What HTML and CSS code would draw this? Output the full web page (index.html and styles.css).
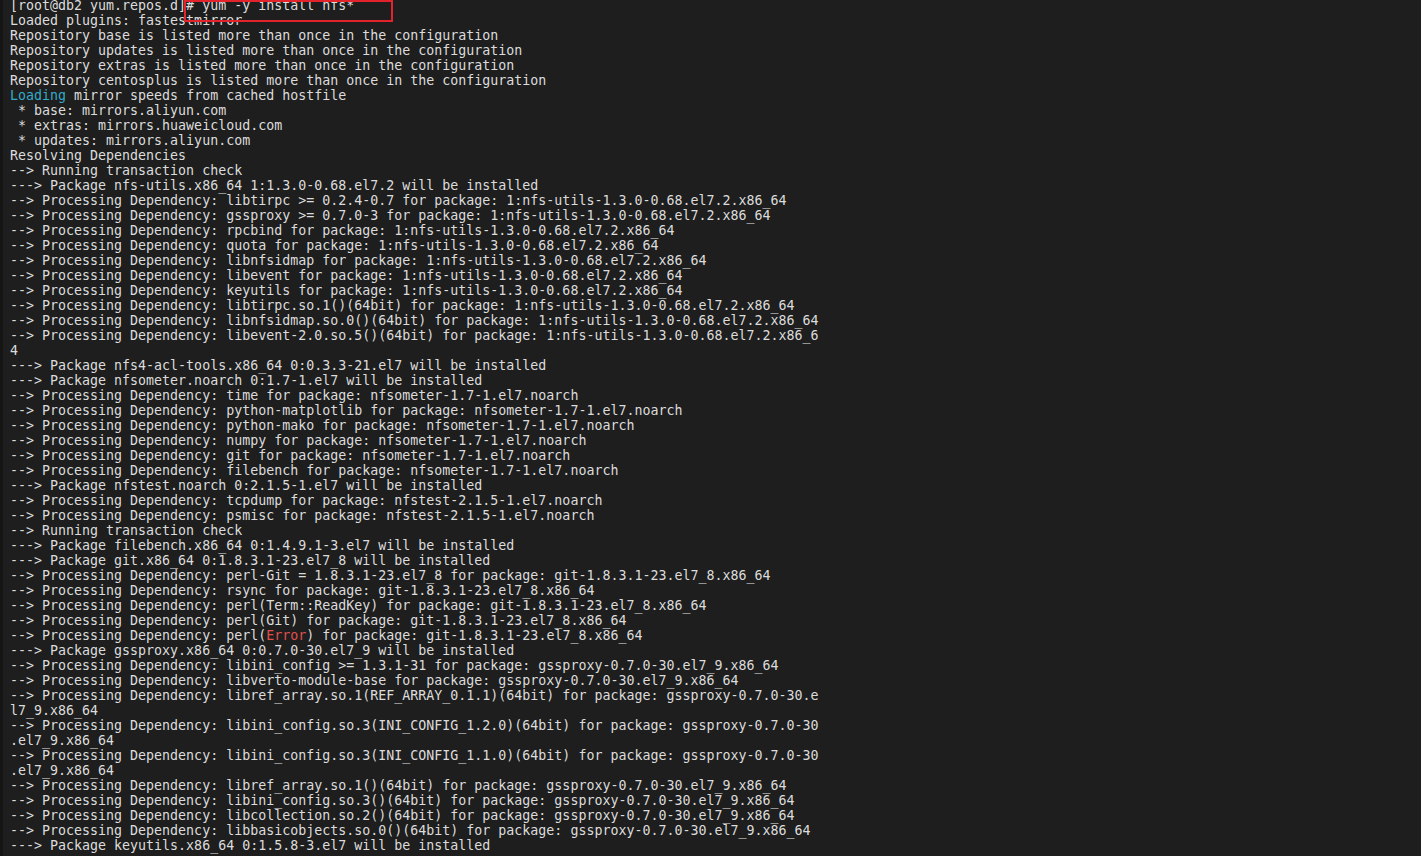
FILE: index.html
```html
<!DOCTYPE html>
<html lang="en">
<head>
<meta charset="utf-8">
<title>yum install nfs*</title>
<link rel="stylesheet" href="styles.css">
</head>
<body>
<div class="terminal">
<pre class="output">[root@db2 yum.repos.d]# yum -y install nfs*
Loaded plugins: fastestmirror
Repository base is listed more than once in the configuration
Repository updates is listed more than once in the configuration
Repository extras is listed more than once in the configuration
Repository centosplus is listed more than once in the configuration
<span class="cyan">Loading</span> mirror speeds from cached hostfile
 * base: mirrors.aliyun.com
 * extras: mirrors.huaweicloud.com
 * updates: mirrors.aliyun.com
Resolving Dependencies
--&gt; Running transaction check
---&gt; Package nfs-utils.x86_64 1:1.3.0-0.68.el7.2 will be installed
--&gt; Processing Dependency: libtirpc &gt;= 0.2.4-0.7 for package: 1:nfs-utils-1.3.0-0.68.el7.2.x86_64
--&gt; Processing Dependency: gssproxy &gt;= 0.7.0-3 for package: 1:nfs-utils-1.3.0-0.68.el7.2.x86_64
--&gt; Processing Dependency: rpcbind for package: 1:nfs-utils-1.3.0-0.68.el7.2.x86_64
--&gt; Processing Dependency: quota for package: 1:nfs-utils-1.3.0-0.68.el7.2.x86_64
--&gt; Processing Dependency: libnfsidmap for package: 1:nfs-utils-1.3.0-0.68.el7.2.x86_64
--&gt; Processing Dependency: libevent for package: 1:nfs-utils-1.3.0-0.68.el7.2.x86_64
--&gt; Processing Dependency: keyutils for package: 1:nfs-utils-1.3.0-0.68.el7.2.x86_64
--&gt; Processing Dependency: libtirpc.so.1()(64bit) for package: 1:nfs-utils-1.3.0-0.68.el7.2.x86_64
--&gt; Processing Dependency: libnfsidmap.so.0()(64bit) for package: 1:nfs-utils-1.3.0-0.68.el7.2.x86_64
--&gt; Processing Dependency: libevent-2.0.so.5()(64bit) for package: 1:nfs-utils-1.3.0-0.68.el7.2.x86_6
4
---&gt; Package nfs4-acl-tools.x86_64 0:0.3.3-21.el7 will be installed
---&gt; Package nfsometer.noarch 0:1.7-1.el7 will be installed
--&gt; Processing Dependency: time for package: nfsometer-1.7-1.el7.noarch
--&gt; Processing Dependency: python-matplotlib for package: nfsometer-1.7-1.el7.noarch
--&gt; Processing Dependency: python-mako for package: nfsometer-1.7-1.el7.noarch
--&gt; Processing Dependency: numpy for package: nfsometer-1.7-1.el7.noarch
--&gt; Processing Dependency: git for package: nfsometer-1.7-1.el7.noarch
--&gt; Processing Dependency: filebench for package: nfsometer-1.7-1.el7.noarch
---&gt; Package nfstest.noarch 0:2.1.5-1.el7 will be installed
--&gt; Processing Dependency: tcpdump for package: nfstest-2.1.5-1.el7.noarch
--&gt; Processing Dependency: psmisc for package: nfstest-2.1.5-1.el7.noarch
--&gt; Running transaction check
---&gt; Package filebench.x86_64 0:1.4.9.1-3.el7 will be installed
---&gt; Package git.x86_64 0:1.8.3.1-23.el7_8 will be installed
--&gt; Processing Dependency: perl-Git = 1.8.3.1-23.el7_8 for package: git-1.8.3.1-23.el7_8.x86_64
--&gt; Processing Dependency: rsync for package: git-1.8.3.1-23.el7_8.x86_64
--&gt; Processing Dependency: perl(Term::ReadKey) for package: git-1.8.3.1-23.el7_8.x86_64
--&gt; Processing Dependency: perl(Git) for package: git-1.8.3.1-23.el7_8.x86_64
--&gt; Processing Dependency: perl(<span class="red">Error</span>) for package: git-1.8.3.1-23.el7_8.x86_64
---&gt; Package gssproxy.x86_64 0:0.7.0-30.el7_9 will be installed
--&gt; Processing Dependency: libini_config &gt;= 1.3.1-31 for package: gssproxy-0.7.0-30.el7_9.x86_64
--&gt; Processing Dependency: libverto-module-base for package: gssproxy-0.7.0-30.el7_9.x86_64
--&gt; Processing Dependency: libref_array.so.1(REF_ARRAY_0.1.1)(64bit) for package: gssproxy-0.7.0-30.e
l7_9.x86_64
--&gt; Processing Dependency: libini_config.so.3(INI_CONFIG_1.2.0)(64bit) for package: gssproxy-0.7.0-30
.el7_9.x86_64
--&gt; Processing Dependency: libini_config.so.3(INI_CONFIG_1.1.0)(64bit) for package: gssproxy-0.7.0-30
.el7_9.x86_64
--&gt; Processing Dependency: libref_array.so.1()(64bit) for package: gssproxy-0.7.0-30.el7_9.x86_64
--&gt; Processing Dependency: libini_config.so.3()(64bit) for package: gssproxy-0.7.0-30.el7_9.x86_64
--&gt; Processing Dependency: libcollection.so.2()(64bit) for package: gssproxy-0.7.0-30.el7_9.x86_64
--&gt; Processing Dependency: libbasicobjects.so.0()(64bit) for package: gssproxy-0.7.0-30.el7_9.x86_64
---&gt; Package keyutils.x86_64 0:1.5.8-3.el7 will be installed</pre>
<div class="highlight"></div>
</div>
</body>
</html>
```

FILE: styles.css
```css
html, body {
  margin: 0;
  padding: 0;
  width: 100%;
  height: 100%;
  overflow: hidden;
  background: #1e1e1e;
}

.terminal {
  position: relative;
  width: 1421px;
  height: 856px;
  background: #1e1e1e;
  border-left: 3px solid #151515;
  box-sizing: border-box;
  overflow: hidden;
}

.output {
  margin: -2px 0 0 0;
  padding: 0 0 0 7px;
  font-family: "DejaVu Sans Mono", "Liberation Mono", monospace;
  font-size: 13.3px;
  line-height: 15px;
  color: #dcdcdc;
  white-space: pre;
}

.cyan {
  color: #35a9c8;
}

.red {
  color: #e0504c;
}

.highlight {
  position: absolute;
  left: 181px;
  top: 0;
  width: 209px;
  height: 22px;
  border: 2px solid #e3232c;
  box-sizing: border-box;
}
```
